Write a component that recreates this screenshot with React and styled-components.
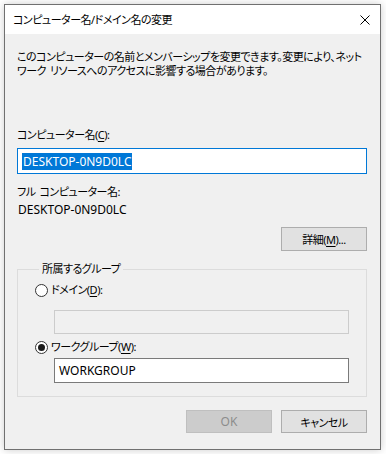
import React from 'react';
import styled, { createGlobalStyle } from 'styled-components';

const GlobalStyle = createGlobalStyle`
  html, body {
    margin: 0;
    padding: 0;
    background: #ffffff;
  }
  body {
    font-family: "Noto Sans", "Noto Sans CJK JP", sans-serif;
    font-feature-settings: "palt";
    font-size: 11px;
    letter-spacing: -0.5px;
    color: #000000;
  }
`;

const Window = styled.div`
  margin: 4px;
  width: 377px;
  height: 446px;
  box-sizing: border-box;
  border: 1px solid #707070;
  background: #f0f0f0;
  box-shadow: 0 0 8px rgba(0, 0, 0, 0.2);
  display: flex;
  flex-direction: column;
`;

const TitleBar = styled.div`
  height: 29px;
  background: #ffffff;
  display: flex;
  align-items: center;
  justify-content: space-between;
  padding: 0 10px 0 8px;
  flex-shrink: 0;
`;

const Title = styled.div`
  line-height: 16px;
`;

const CloseButton = styled.div`
  width: 10px;
  height: 10px;
  display: flex;
`;

const Body = styled.div`
  padding: 16px 13px 0 12px;
  display: flex;
  flex-direction: column;
`;

const Text = styled.div`
  line-height: ${({ lh }) => lh || 16}px;
  margin-top: ${({ mt }) => mt || 0}px;
  padding-left: ${({ pl }) => pl || 0}px;
  white-space: nowrap;
`;

const Space = styled.span`
  display: inline-block;
  width: 4px;
`;

const Latin = styled.span`
  font-size: 12px;
  letter-spacing: 0;
`;

const Key = styled.span`
  text-decoration: underline;
  text-underline-offset: 2px;
`;

const TextBox = styled.div`
  box-sizing: border-box;
  height: ${({ h }) => h || 26}px;
  width: ${({ w }) => (w ? `${w}px` : '100%')};
  margin-top: ${({ mt }) => mt || 0}px;
  margin-left: ${({ ml }) => ml || 0}px;
  border: 1px solid ${({ border }) => border || '#7a7a7a'};
  background: ${({ bg }) => bg || '#ffffff'};
  display: flex;
  align-items: center;
  padding-left: 4px;
  white-space: nowrap;
`;

const Selected = styled.span`
  background: #0078d7;
  color: #ffffff;
  line-height: 15px;
  padding: 0 1px;
`;

const Button = styled.div`
  box-sizing: border-box;
  width: 86px;
  height: ${({ h }) => h || 24}px;
  border: 1px solid ${({ disabled }) => (disabled ? '#bfbfbf' : '#adadad')};
  background: ${({ disabled }) => (disabled ? '#cccccc' : '#e1e1e1')};
  color: ${({ disabled }) => (disabled ? '#8c8c8c' : '#000000')};
  display: flex;
  align-items: center;
  justify-content: center;
`;

const ButtonRow = styled.div`
  display: flex;
  justify-content: flex-end;
  gap: 9px;
  margin-top: ${({ mt }) => mt || 0}px;
`;

const Group = styled.fieldset`
  margin: 10px 0 0 0;
  padding: 5px 17px 13px 17px;
  border: 1px solid #dcdcdc;
  min-width: 0;
`;

const Legend = styled.legend`
  padding: 0 3px;
  margin-left: 4px;
  line-height: 16px;
`;

const RadioRow = styled.div`
  display: flex;
  align-items: center;
  gap: 3px;
  line-height: 16px;
  margin-top: ${({ mt }) => mt || 0}px;
`;

const RadioCircle = styled.div`
  box-sizing: border-box;
  width: 13px;
  height: 13px;
  border-radius: 50%;
  border: 1px solid #333333;
  background: #ffffff;
  display: flex;
  align-items: center;
  justify-content: center;

  &::after {
    content: '';
    width: 7px;
    height: 7px;
    border-radius: 50%;
    background: ${({ checked }) => (checked ? '#1a1a1a' : 'transparent')};
  }
`;

const Radio = ({ checked, children, mt }) => (
  <RadioRow mt={mt}>
    <RadioCircle checked={checked} />
    <span>{children}</span>
  </RadioRow>
);

export default function App() {
  return (
    <>
      <GlobalStyle />
      <Window>
        <TitleBar>
          <Title>コンピューター名/ドメイン名の変更</Title>
          <CloseButton>
            <svg width="10" height="10" viewBox="0 0 10 10">
              <path d="M0.5 0.5 L9.5 9.5 M9.5 0.5 L0.5 9.5" stroke="#000" strokeWidth="1" fill="none" />
            </svg>
          </CloseButton>
        </TitleBar>
        <Body>
          <Text lh={14}>
            このコンピューターの名前とメンバーシップを変更できます。変更により、ネット
            <br />
            ワーク<Space />リソースへのアクセスに影響する場合があります。
          </Text>
          <Text mt={49}>
            コンピューター名(<Key>C</Key>):
          </Text>
          <TextBox mt={5} border="#0078d7">
            <Latin>
              <Selected>DESKTOP-0N9D0LC</Selected>
            </Latin>
          </TextBox>
          <Text mt={10}>
            フル<Space />コンピューター名:
          </Text>
          <Text mt={2} pl={1}>
            <Latin>DESKTOP-0N9D0LC</Latin>
          </Text>
          <ButtonRow mt={9}>
            <Button>
              詳細(<Key>M</Key>)...
            </Button>
          </ButtonRow>
          <Group>
            <Legend>所属するグループ</Legend>
            <Radio>
              ドメイン(<Key>D</Key>):
            </Radio>
            <TextBox mt={12} ml={19} w={295} h={24} border="#cccccc" bg="#f0f0f0" />
            <Radio checked mt={5}>
              ワークグループ(<Key>W</Key>):
            </Radio>
            <TextBox mt={3} ml={19} w={295} h={25}>
              <Latin>WORKGROUP</Latin>
            </TextBox>
          </Group>
          <ButtonRow mt={13}>
            <Button disabled h={23}>
              <Latin>OK</Latin>
            </Button>
            <Button h={23}>キャンセル</Button>
          </ButtonRow>
        </Body>
      </Window>
    </>
  );
}
